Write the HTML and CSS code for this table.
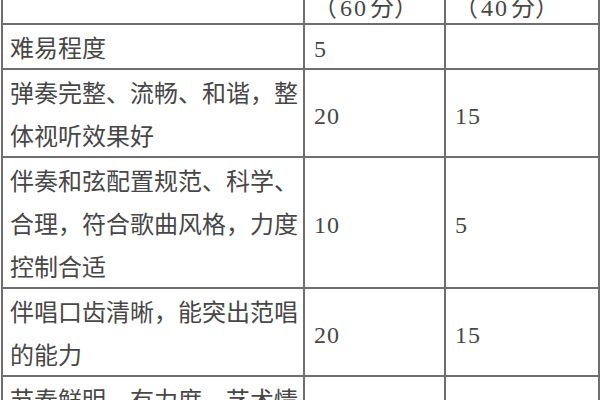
FILE: index.html
```html
<!DOCTYPE html>
<html lang="zh-CN">
<head>
<meta charset="utf-8">
<title>评分标准</title>
<link rel="stylesheet" href="styles.css">
</head>
<body>
<table class="score">
  <colgroup>
    <col class="c-item">
    <col class="c-a">
    <col class="c-b">
  </colgroup>
  <thead>
    <tr class="head">
      <th></th>
      <th>（<span class="n">60</span>分）</th>
      <th>（<span class="n">40</span>分）</th>
    </tr>
  </thead>
  <tbody>
    <tr>
      <td>难易程度</td>
      <td class="num"><span class="n">5</span></td>
      <td class="num"></td>
    </tr>
    <tr>
      <td>弹奏完整、流畅、和谐，整体视听效果好</td>
      <td class="num"><span class="n">20</span></td>
      <td class="num"><span class="n">15</span></td>
    </tr>
    <tr>
      <td>伴奏和弦配置规范、科学、合理，符合歌曲风格，力度控制合适</td>
      <td class="num"><span class="n">10</span></td>
      <td class="num"><span class="n">5</span></td>
    </tr>
    <tr>
      <td>伴唱口齿清晰，能突出范唱的能力</td>
      <td class="num"><span class="n">20</span></td>
      <td class="num"><span class="n">15</span></td>
    </tr>
    <tr>
      <td>节奏鲜明、有力度、艺术情感表现充分</td>
      <td class="num"></td>
      <td class="num"></td>
    </tr>
  </tbody>
</table>
</body>
</html>
```
FILE: styles.css
```css
html, body {
  margin: 0;
  padding: 0;
  background: #ffffff;
  overflow: hidden;
}

body {
  width: 600px;
  height: 400px;
}

.score {
  border-collapse: collapse;
  table-layout: fixed;
  width: 597px;
  margin: -13px 0 0 1px;
  font-family: "Noto Sans CJK SC", "Liberation Serif", sans-serif;
  font-size: 24px;
  font-weight: 400;
  color: #474747;
}

.c-item { width: 302px; }
.c-a { width: 141px; }
.c-b { width: 154px; }

.score th,
.score td {
  border: 2px solid #6e6e6e;
  padding: 0 4px 0 7px;
  text-align: left;
  vertical-align: middle;
  line-height: 43px;
  font-weight: 400;
}

.score .head th {
  line-height: 34px;
  vertical-align: bottom;
  padding-left: 8px;
}

.score .head .n {
  letter-spacing: 2px;
  padding: 0 2px 0 3px;
}

.score td.num {
  padding-left: 9px;
}

.n {
  font-family: "Liberation Serif", serif;
  letter-spacing: 1px;
  line-height: 1;
}
```
